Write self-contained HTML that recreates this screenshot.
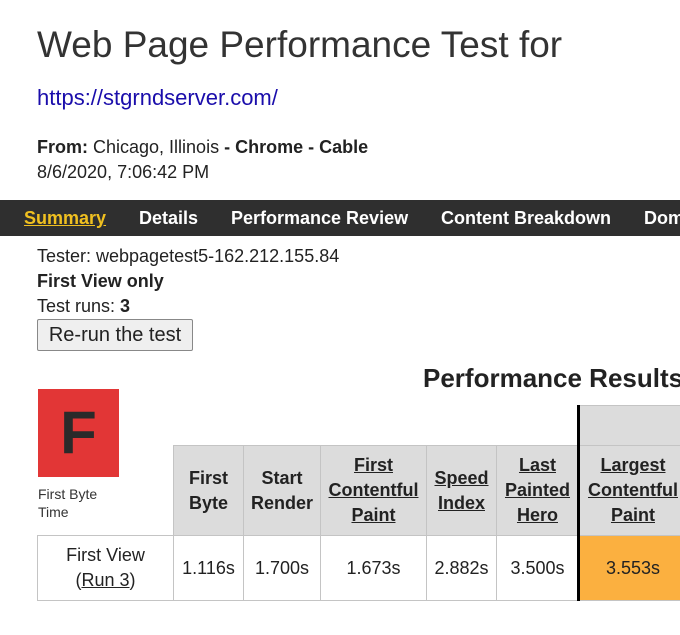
<!DOCTYPE html>
<html><head><style>
html,body{margin:0;width:680px;height:635px;overflow:hidden}
body{background:#fff;font-family:"Liberation Sans",Arial,sans-serif;color:#222;position:relative}
.a{position:absolute;white-space:nowrap}
.nav{position:absolute;left:0;top:200px;width:680px;height:36px;background:#2f2f2f;overflow:hidden}
.nav span{position:absolute;top:8px;font-size:18px;font-weight:bold;color:#fff;white-space:nowrap}
.c{position:absolute;box-sizing:border-box;border:1px solid #c4c4c4;display:flex;align-items:center;justify-content:center;text-align:center;font-size:18px;line-height:25px}
.c>div{text-align:center}
.h{background:#dcdcdc;font-weight:bold;color:#222}
.h u{text-decoration:underline}
</style></head><body>
<div class="a" style="left:37px;top:24px;font-size:37px;color:#333">Web Page Performance Test for</div>
<div class="a" style="left:37px;top:85px;font-size:22px;color:#1a0dab">https://stgrndserver.com/</div>
<div class="a" style="left:37px;top:137px;font-size:18px"><b>From:</b> Chicago, Illinois <b>- Chrome - Cable</b></div>
<div class="a" style="left:37px;top:162px;font-size:18px">8/6/2020, 7:06:42 PM</div>
<div class="nav">
<span style="left:24px;color:#f0c020;text-decoration:underline">Summary</span>
<span style="left:139px">Details</span>
<span style="left:231px">Performance Review</span>
<span style="left:441px">Content Breakdown</span>
<span style="left:644px">Domains</span>
</div>
<div class="a" style="left:37px;top:246px;font-size:18px">Tester: webpagetest5-162.212.155.84</div>
<div class="a" style="left:37px;top:271px;font-size:18px;font-weight:bold">First View only</div>
<div class="a" style="left:37px;top:296px;font-size:18px">Test runs: <b>3</b></div>
<div class="a" style="left:37px;top:319px;width:156px;height:32px;box-sizing:border-box;border:1px solid #888;border-radius:2px;background:#efefef;font-size:20px;text-align:center;line-height:30px">Re-run the test</div>
<div class="a" style="left:423px;top:363px;font-size:26px;font-weight:bold;color:#222">Performance Results</div>
<div class="a" style="left:38px;top:389px;width:81px;height:88px;background:#e23636;color:#2a2a2a;font-size:60px;font-weight:bold;text-align:center;line-height:88px">F</div>
<div class="a" style="left:38px;top:485px;font-size:14px;line-height:18px;color:#333">First Byte<br>Time</div>
<div class="c h" style="left:578px;top:405px;width:110px;height:41px;border-bottom:none"></div>
<div class="c h" style="left:173px;top:445px;width:71px;height:91px"><div>First<br>Byte</div></div>
<div class="c h" style="left:243px;top:445px;width:78px;height:91px"><div>Start<br>Render</div></div>
<div class="c h" style="left:320px;top:445px;width:107px;height:91px"><div><u>First<br>Contentful<br>Paint</u></div></div>
<div class="c h" style="left:426px;top:445px;width:71px;height:91px"><div><u>Speed<br>Index</u></div></div>
<div class="c h" style="left:496px;top:445px;width:83px;height:91px"><div><u>Last<br>Painted<br>Hero</u></div></div>
<div class="c h" style="left:578px;top:445px;width:110px;height:91px"><div><u>Largest<br>Contentful<br>Paint</u></div></div>
<div class="c" style="left:37px;top:535px;width:137px;height:66px"><div>First View<br>(<u>Run 3</u>)</div></div>
<div class="c" style="left:173px;top:535px;width:71px;height:66px">1.116s</div>
<div class="c" style="left:243px;top:535px;width:78px;height:66px">1.700s</div>
<div class="c" style="left:320px;top:535px;width:107px;height:66px">1.673s</div>
<div class="c" style="left:426px;top:535px;width:71px;height:66px">2.882s</div>
<div class="c" style="left:496px;top:535px;width:83px;height:66px">3.500s</div>
<div class="c" style="left:578px;top:535px;width:110px;height:66px;background:#fbb040">3.553s</div>
<div class="a" style="left:577px;top:405px;width:3px;height:196px;background:#000"></div>
</body></html>
